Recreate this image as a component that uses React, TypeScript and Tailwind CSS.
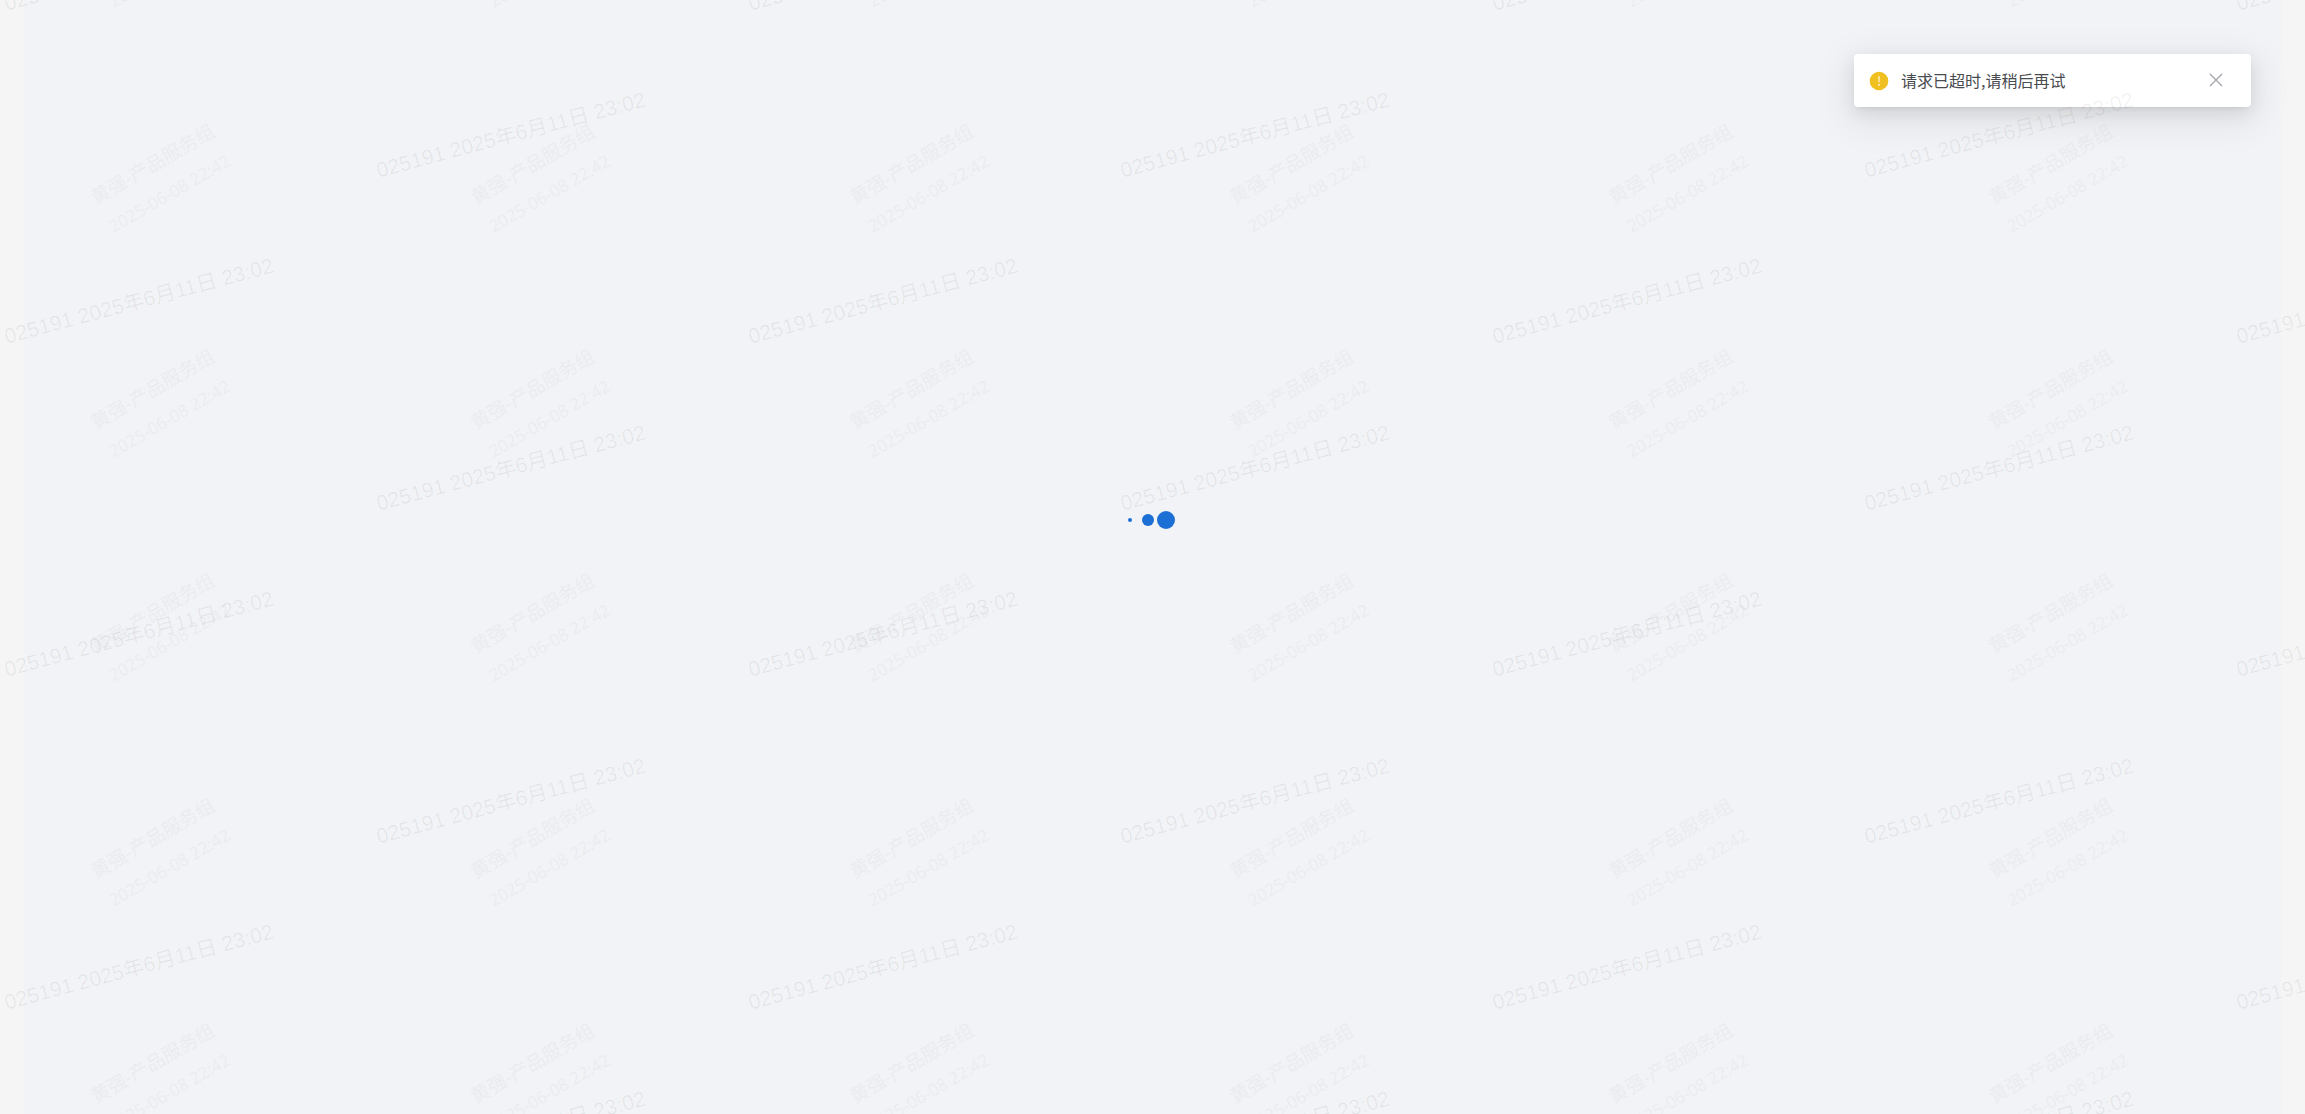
import { useState } from "react";

type Mark = { x: number; y: number };

// columns x rows of watermark anchors, first one at (x, y)
function tile(x: number, y: number, dx: number, dy: number, cols: number, rows: number): Mark[] {
  const marks: Mark[] = [];
  for (let r = 0; r < rows; r++) {
    for (let c = 0; c < cols; c++) {
      marks.push({ x: Math.round(x + c * dx), y: Math.round(y + r * dy) });
    }
  }
  return marks;
}

const userMarks = tile(161, -46, 379.5, 224.75, 6, 6);
const stampMarks = [...tile(139, -32, 744, 333, 4, 5), ...tile(511, 135, 744, 333, 3, 4)];

function Watermarks() {
  return (
    <div className="pointer-events-none absolute inset-0 z-20 overflow-hidden whitespace-nowrap">
      {userMarks.map((m) => (
        <div
          key={`u-${m.x}-${m.y}`}
          className="absolute -translate-x-1/2 -translate-y-1/2 -rotate-30 text-center leading-[33px] text-[#00003c]/3 font-['Open_Sans','Noto_Sans_CJK_SC',sans-serif]"
          style={{ left: m.x, top: m.y }}
        >
          <p className="text-[19px]">黄强-产品服务组</p>
          <p className="text-[17px]">2025-06-08 22:42</p>
        </div>
      ))}
      {stampMarks.map((m) => (
        <p
          key={`s-${m.x}-${m.y}`}
          className="absolute -translate-x-1/2 -translate-y-1/2 -rotate-15 text-[21px] leading-6 text-black/6 font-['Liberation_Sans','Noto_Sans_CJK_SC',sans-serif]"
          style={{ left: m.x, top: m.y }}
        >
          025191 2025年6月11日 23:02
        </p>
      ))}
    </div>
  );
}

function Loading() {
  return (
    <div role="status" aria-label="loading" className="flex items-center gap-[10px]">
      <span className="size-1 rounded-full bg-[#1c6fd4]" />
      <span className="flex items-center gap-[3px]">
        <span className="size-3 rounded-full bg-[#1c6fd4]" />
        <span className="size-[18px] rounded-full bg-[#1c6fd4]" />
      </span>
    </div>
  );
}

function Notice({ onClose }: { onClose: () => void }) {
  return (
    <div
      role="alert"
      className="absolute top-[54px] right-[54px] z-10 flex h-[53px] w-[397px] items-center rounded-sm bg-white pr-7 pb-0.5 pl-[15px] shadow-[0_3px_6px_-4px_rgba(0,0,0,0.14),0_6px_18px_0_rgba(0,0,0,0.09),0_10px_36px_10px_rgba(0,0,0,0.06)]"
    >
      <svg viewBox="0 0 20 20" className="mt-[3px] size-5 shrink-0">
        <circle cx="10" cy="10" r="9.3" fill="#f0c020" />
        <path d="M9.4 5.2h1.2l-.15 6.2h-.9z" fill="#fff" />
        <circle cx="10" cy="13.8" r="0.9" fill="#fff" />
      </svg>
      <p className="ml-3 flex-1 text-base leading-6 text-[#484b50] font-['Noto_Sans_CJK_SC',sans-serif]">
        请求已超时,请稍后再试
      </p>
      <button type="button" aria-label="关闭" onClick={onClose} className="cursor-pointer text-[#a3a6ab]">
        <svg viewBox="0 0 14 14" className="size-3.5" fill="none" stroke="currentColor" strokeWidth="1.4">
          <path d="M1 1l12 12M13 1L1 13" />
        </svg>
      </button>
    </div>
  );
}

export default function App() {
  const [open, setOpen] = useState(true);

  return (
    <div className="relative min-h-screen bg-[#f5f5f5] px-6">
      <main className="flex min-h-screen items-center justify-center bg-[#f2f3f6] pr-[2px] pb-[74px]">
        <Loading />
      </main>
      {open && <Notice onClose={() => setOpen(false)} />}
      <Watermarks />
    </div>
  );
}
